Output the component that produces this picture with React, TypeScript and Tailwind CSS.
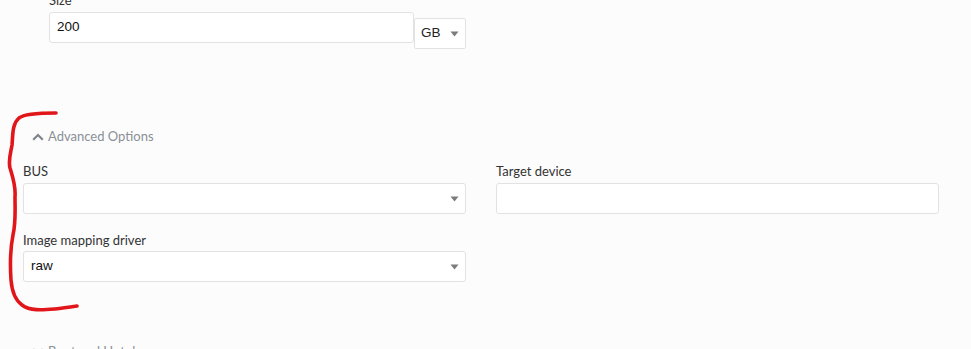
import React from "react";

const Caret = () => (
  <svg width="9" height="6" viewBox="0 0 9 6" className="shrink-0">
    <path d="M0.5 0.5 L8.5 0.5 L4.5 5.5 Z" fill="#7b7b7b" />
  </svg>
);

const Label = ({ children, mb = "mb-[4px]" }: { children: React.ReactNode; mb?: string }) => (
  <div className={`text-[13px] leading-[16px] text-[#333333] ${mb}`}>{children}</div>
);

const inputFont = { fontFamily: "'Liberation Sans', Arial, sans-serif" };

export default function App() {
  return (
    <div
      className="relative w-[971px] h-[349px] overflow-hidden bg-[#fcfcfc]"
      style={{ fontFamily: "Lato, 'Open Sans', sans-serif" }}
    >
      {/* Size */}
      <div className="pl-[49px] -mt-[8px]">
        <Label>Size</Label>
        <div className="flex items-start">
          <div
            className="w-[365px] h-[31px] bg-white border border-[#e2e2e2] rounded-[3px] flex items-center pl-[7px] text-[13.5px] text-[#111]"
            style={inputFont}
          >
            200
          </div>
          <div
            className="mt-[6px] w-[52px] h-[31px] bg-white border border-[#e2e2e2] rounded-[2px] flex items-center justify-between pl-[6px] pr-[6px] text-[13.5px] text-[#222]"
            style={inputFont}
          >
            <span>GB</span>
            <Caret />
          </div>
        </div>
      </div>

      {/* Advanced options header */}
      <div className="mt-[78px] pl-[32px] flex items-center h-[20px] text-[13px] text-[#8a9097]">
        <svg width="12" height="8" viewBox="0 0 12 8" className="mr-[4px]">
          <path d="M1.2 6.8 L6 2 L10.8 6.8" fill="none" stroke="#7e858c" strokeWidth="2.2" />
        </svg>
        <span>Advanced Options</span>
      </div>

      {/* fields */}
      <div className="pl-[23px] grid grid-cols-[443px_443px] gap-x-[30px] mt-[16px]">
        <div>
          <Label>BUS</Label>
          <div className="h-[31px] bg-white border border-[#e2e2e2] rounded-[3px] flex items-center justify-end pr-[6px]">
            <Caret />
          </div>
        </div>
        <div>
          <Label>Target device</Label>
          <div className="h-[31px] bg-white border border-[#e2e2e2] rounded-[3px]" />
        </div>
        <div className="mt-[18px]">
          <Label mb="mb-[3px]">Image mapping driver</Label>
          <div
            className="h-[31px] bg-white border border-[#e2e2e2] rounded-[3px] flex items-center justify-between pl-[7px] pr-[6px] text-[13.5px] text-[#111]"
            style={inputFont}
          >
            <span>raw</span>
            <Caret />
          </div>
        </div>
      </div>

      {/* next section header (cut off) */}
      <div className="mt-[60px] pl-[32px] flex items-center h-[20px] text-[13px] text-[#8a9097]">
        <svg width="12" height="8" viewBox="0 0 12 8" className="mr-[4px]">
          <path d="M1.2 1.2 L6 6 L10.8 1.2" fill="none" stroke="#7e858c" strokeWidth="2.2" />
        </svg>
        <span>Boot and Hotplug</span>
      </div>

      {/* red hand-drawn annotation */}
      <svg className="absolute inset-0 pointer-events-none" width="971" height="349" viewBox="0 0 971 349">
        <path
          d="M56 113 C40 113 24 114 19 118 C12 124 13 135 12 145 C11 152 8 160 10 168 C13 178 16 186 15 197 C15 210 16 222 13 235 C10 250 10 265 11 280 C12 292 15 300 22 305 C30 311 42 310 55 309 C63 308 70 307 77 306"
          fill="none"
          stroke="#e0161a"
          strokeWidth="3.6"
          strokeLinecap="round"
          strokeLinejoin="round"
        />
      </svg>
    </div>
  );
}
